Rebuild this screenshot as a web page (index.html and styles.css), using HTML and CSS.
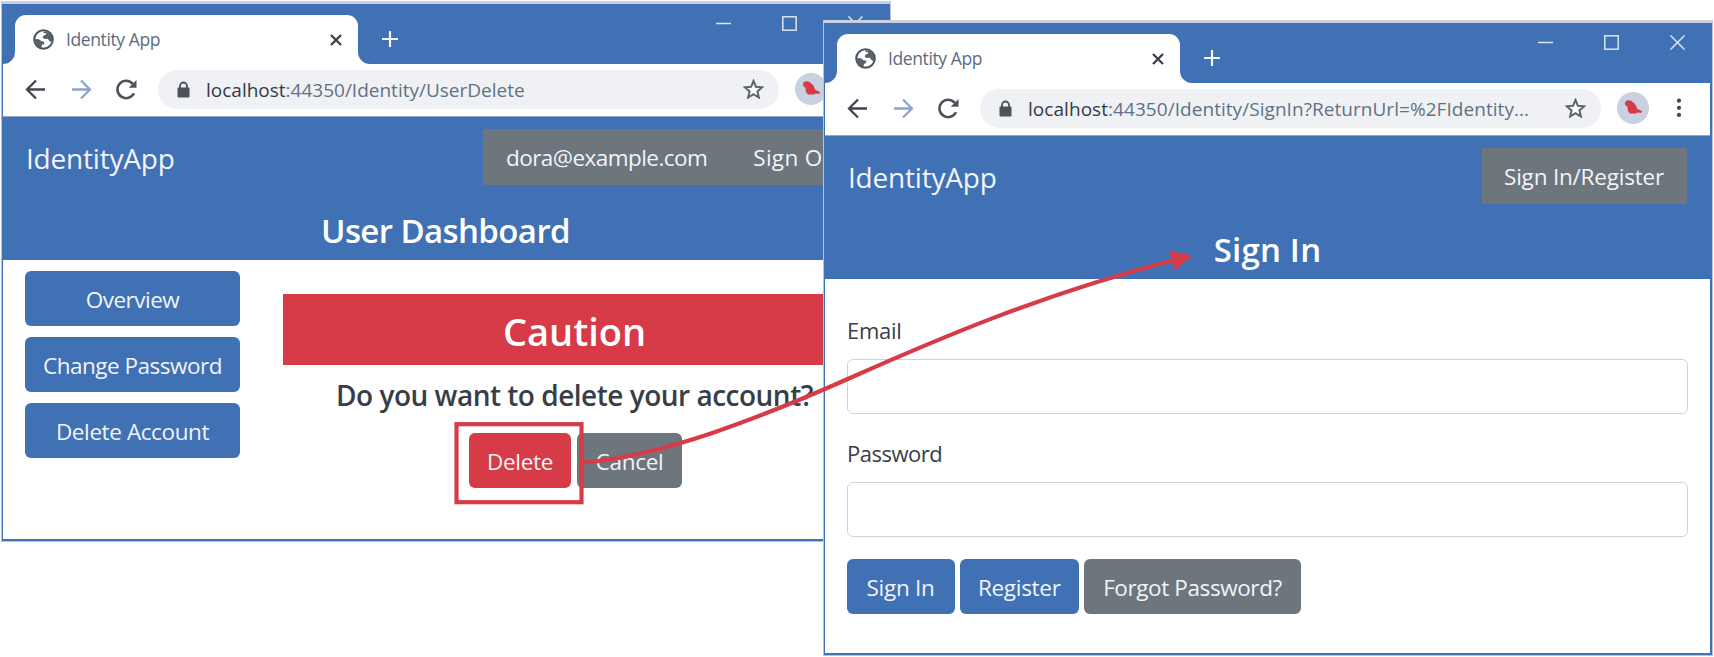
FILE: index.html
```html
<!DOCTYPE html>
<html lang="en">
<head>
<meta charset="utf-8">
<title>Identity App</title>
<link rel="stylesheet" href="styles.css">
</head>
<body>
<svg class="defs" width="0" height="0">
  <symbol id="globe" viewBox="0 0 21 21"><circle cx="10.5" cy="10.5" r="9.3" fill="#fff" stroke="#4b525b" stroke-width="2"/><path d="M11 2.2c3 .3 6 2.200 7.700 5.300.7 2 .5 4-.5 6l-2.200-2-1.200-1.800-3.300.3-2-1.800 1.300-1.800 2.400-.8-.4-1.300-2.600-.4zM1.800 10l4.200.3 2.600 1.900 2.800.5-.4 2.600-2 .5-.5 2.900C4.400 18 1.700 14.300 1.800 10z" fill="#59616a"/></symbol>
  <symbol id="x" viewBox="0 0 12 12"><path d="M1 1l10 10M11 1L1 11" fill="none" stroke="#3a4149" stroke-width="2.300"/></symbol>
  <symbol id="plus" viewBox="0 0 18 18"><path d="M9 1v16M1 9h16" stroke="#f4f6f9" stroke-width="2.200"/></symbol>
  <symbol id="back" viewBox="0 0 21 21"><path d="M20 10.500H2M11 1.500l-9 9 9 9" fill="none" stroke="currentColor" stroke-width="2.300"/></symbol>
  <symbol id="reload" viewBox="0 0 21 21"><path d="M18 14.300A8.700 8.700 0 1 1 16.800 4.800" fill="none" stroke="#4b525b" stroke-width="2.600"/><path d="M20.500 1v7.800h-7.800z" fill="#4b525b"/></symbol>
  <symbol id="lock" viewBox="0 0 13 17"><path d="M3 8V5a3.500 3.500 0 0 1 7 0v3" fill="none" stroke="#4b525b" stroke-width="1.800"/><rect x=".5" y="6.500" width="12" height="10" rx="1" fill="#4b525b"/></symbol>
  <symbol id="star" viewBox="0 0 21 20"><path d="M10.500 2l2.400 5.800 6.300.5-4.800 4.100 1.500 6.100-5.400-3.300-5.400 3.300 1.500-6.100-4.800-4.100 6.300-.5z" fill="#fff" stroke="#5a6570" stroke-width="2"/></symbol>
  <symbol id="bird" viewBox="0 0 32 32"><circle cx="16" cy="16" r="16" fill="#c9d1e0"/><path d="M8 10.500C9 8 12 7.500 14.500 9l3.500 3 2.500 5 4.500 2-1 2-3-.5-2.500 1H13c-2-1.500-2.500-4-2.500-6.500L8 12.500z" fill="#d63b47"/></symbol>
  <symbol id="dots" viewBox="0 0 6 20"><circle cx="3" cy="2.700" r="2.100"/><circle cx="3" cy="9.800" r="2.100"/><circle cx="3" cy="16.900" r="2.100"/></symbol>
  <symbol id="min" viewBox="0 0 15 15"><path d="M0 7.500h15" stroke="#dde4f0" stroke-width="1.500"/></symbol>
  <symbol id="max" viewBox="0 0 15 15"><rect x=".8" y=".8" width="13.400" height="13.400" fill="none" stroke="#dde4f0" stroke-width="1.500"/></symbol>
  <symbol id="close" viewBox="0 0 15 15"><path d="M.5.500l14 14M14.500.500l-14 14" stroke="#dde4f0" stroke-width="1.500"/></symbol>
  <symbol id="curve" viewBox="0 0 14 14"><path d="M0 14A14 14 0 0 0 14 0V14z" fill="#fff"/></symbol>
</svg>

<main class="stage">
  <section class="window window-dashboard">
    <div class="tabs">
      <svg class="curve" width="12" height="12"><use href="#curve"/></svg>
      <div class="tab"><svg width="21" height="21"><use href="#globe"/></svg><span class="tab-title">Identity App</span><svg class="tab-x" width="12" height="12"><use href="#x"/></svg></div>
      <svg class="curve flip" width="12" height="12"><use href="#curve"/></svg>
      <svg class="plus" width="18" height="18"><use href="#plus"/></svg>
      <div class="controls"><svg width="15" height="15"><use href="#min"/></svg><svg width="15" height="15"><use href="#max"/></svg><svg width="15" height="15"><use href="#close"/></svg></div>
    </div>
    <div class="toolbar">
      <svg class="nav-icon" width="21" height="21"><use href="#back"/></svg>
      <svg class="nav-icon forward" width="21" height="21"><use href="#back"/></svg>
      <svg class="nav-icon" width="21" height="21"><use href="#reload"/></svg>
      <div class="address"><svg width="13" height="17"><use href="#lock"/></svg><span class="url url-delete"><b>localhost</b>:44350/Identity/UserDelete</span><svg class="star" width="21" height="20"><use href="#star"/></svg></div>
      <svg class="avatar" width="32" height="32"><use href="#bird"/></svg>
      <svg class="dots" width="6" height="20"><use href="#dots"/></svg>
    </div>
    <header class="header">
      <div class="navbar"><span class="brand">IdentityApp</span><nav class="account account-user"><span class="mail">dora@example.com</span><span class="signout">Sign Out</span></nav></div>
      <h1 class="title title-dashboard">User Dashboard</h1>
    </header>
    <div class="dashboard">
      <aside class="menu"><a class="btn overview">Overview</a><a class="btn change">Change Password</a><a class="btn delete-account">Delete Account</a></aside>
      <div class="panel">
        <h2 class="caution">Caution</h2>
        <p class="question">Do you want to delete your account?</p>
        <div class="actions"><a class="btn danger">Delete</a><a class="btn gray cancel">Cancel</a></div>
      </div>
    </div>
  </section>

  <section class="window window-signin">
    <div class="tabs">
      <svg class="curve" width="12" height="12"><use href="#curve"/></svg>
      <div class="tab"><svg width="21" height="21"><use href="#globe"/></svg><span class="tab-title">Identity App</span><svg class="tab-x" width="12" height="12"><use href="#x"/></svg></div>
      <svg class="curve flip" width="12" height="12"><use href="#curve"/></svg>
      <svg class="plus" width="18" height="18"><use href="#plus"/></svg>
      <div class="controls"><svg width="15" height="15"><use href="#min"/></svg><svg width="15" height="15"><use href="#max"/></svg><svg width="15" height="15"><use href="#close"/></svg></div>
    </div>
    <div class="toolbar">
      <svg class="nav-icon" width="21" height="21"><use href="#back"/></svg>
      <svg class="nav-icon forward" width="21" height="21"><use href="#back"/></svg>
      <svg class="nav-icon" width="21" height="21"><use href="#reload"/></svg>
      <div class="address"><svg width="13" height="17"><use href="#lock"/></svg><span class="url url-signin"><b>localhost</b>:44350/Identity/SignIn?ReturnUrl=%2FIdentity...</span><svg class="star" width="21" height="20"><use href="#star"/></svg></div>
      <svg class="avatar" width="32" height="32"><use href="#bird"/></svg>
      <svg class="dots" width="6" height="20"><use href="#dots"/></svg>
    </div>
    <header class="header">
      <div class="navbar"><span class="brand">IdentityApp</span><nav class="account account-guest"><span>Sign In/Register</span></nav></div>
      <h1 class="title title-signin">Sign In</h1>
    </header>
    <form class="form">
      <label class="label-email" for="email">Email</label>
      <input id="email" type="text">
      <label class="label-password" for="password">Password</label>
      <input id="password" type="password">
      <div class="form-actions"><a class="btn signin">Sign In</a><a class="btn register">Register</a><a class="btn gray forgot">Forgot Password?</a></div>
    </form>
  </section>

  <svg class="annotation" width="1714" height="657" viewBox="0 0 1714 657">
    <rect x="456.500" y="424.200" width="125" height="78" fill="none" stroke="#d63b47" stroke-width="4.200"/>
    <path d="M583 462.500C660 457 760 418 850 378S1040 295 1174 260" fill="none" stroke="#d63b47" stroke-width="4.200"/>
    <path d="M1169 250.500L1192 255.500L1175 270.500z" fill="#d63b47"/>
  </svg>
</main>
</body>
</html>
```
FILE: styles.css
```css
* { box-sizing: border-box; }
body { margin: 0; background: #fff; font-family: "Open Sans", "Noto Sans", sans-serif; color: #383e48; }
svg { display: block; flex: none; }
.defs { position: absolute; }
.stage { position: relative; width: 1714px; height: 657px; overflow: hidden; }

/* Overlapping desktop windows */
.window { position: absolute; width: 890px; background: #fff; border: 1px solid #b4c2da; border-top: 3px solid #c9d1e1; box-shadow: inset 1px 0 #4071b4, inset -2px 0 #4071b4, inset 0 -2px #4071b4; padding: 0 2px 2px 1px; }
.window-dashboard { left: 1px; top: 1px; height: 541px; }
.window-signin { left: 823px; top: 20px; height: 636px; }

.tabs { display: flex; align-items: flex-end; height: 60px; background: #4071b4; }
.tab { display: flex; align-items: center; width: 343px; height: 49px; padding: 0 16px 0 18px; background: #fff; border-radius: 11px 11px 0 0; }
.tab-title { margin-left: 12px; padding-bottom: 2px; font-size: 17.500px; letter-spacing: -.4px; line-height: 24px; color: #5d6b7e; white-space: nowrap; }
.tab-x { margin-left: auto; }
.flip { transform: scaleX(-1); }
.plus { align-self: center; margin: 10px 0 0 11px; }
.controls { display: flex; gap: 51px; align-self: flex-start; margin: 12px 25px 0 auto; }

.toolbar { display: flex; align-items: center; height: 53px; padding: 0 0 2px 22px; border-bottom: 1px solid #94a7c4; color: #3f464e; }
.nav-icon { margin-right: 24.500px; }
.forward { color: #8fa5cb; transform: scaleX(-1); }
.address { display: flex; align-items: center; width: 621px; height: 39px; margin-left: -4px; padding: 0 15px 0 19px; border-radius: 20px; background: #eff1f4; }
.url { margin-left: 16.500px; padding-top: 1px; font-size: 19px; line-height: 28px; color: #617186; white-space: nowrap; }
.url b { font-weight: 400; color: #343b47; }
.url-delete { letter-spacing: 0; }
.url-signin { letter-spacing: .05px; }
.star { margin-left: auto; }
.avatar { margin-left: 16px; }
.dots { margin-left: 27px; fill: #3f464e; }

.header { height: 143px; padding: 12px 23px 0 23px; background: #4071b4; color: #fff; }
.navbar { display: flex; justify-content: space-between; height: 56px; color: #f1f4f9; }
.brand { font-size: 28px; line-height: 58px; letter-spacing: -.2px; }
.account { display: flex; align-items: center; background: #6d757d; font-size: 22.500px; white-space: nowrap; letter-spacing: -.2px; padding: 0 23px 0; gap: 46px; }
.account-user { width: 382px; }
.mail { letter-spacing: -.55px; }
.signout { letter-spacing: .3px; }
.account-guest { width: 205px; padding-left: 22px; }
.title { margin: 22px 0 0; font-size: 33px; line-height: 48px; font-weight: 600; text-align: center; }
.title-dashboard { letter-spacing: -.6px; }
.title-signin { letter-spacing: .2px; }

.btn { display: flex; align-items: center; justify-content: center; height: 55px; padding-top: 1px; border-radius: 6px; background: #4071b4; color: #f1f4f9; font-size: 22.500px; letter-spacing: -.3px; white-space: nowrap; }
.gray { background: #6d757d; }
.danger { width: 102px; background: #d63b47; }
.cancel { width: 105px; }
.overview, .change { letter-spacing: -.5px; }
.delete-account, .forgot { letter-spacing: -.4px; }
.dashboard { display: flex; justify-content: space-between; padding: 11px 22px 0 22px; }
.menu { display: flex; flex-direction: column; gap: 11px; width: 215px; }
.panel { width: 583px; padding-top: 23px; }
.caution { margin: 0; height: 71px; background: #d63b47; color: #fff; font-size: 38px; line-height: 75px; font-weight: 600; text-align: center; }
.question { margin: 11px 0 0; font-size: 28px; line-height: 38px; font-weight: 600; letter-spacing: -.5px; text-align: center; white-space: nowrap; }
.actions { display: flex; justify-content: center; gap: 6px; margin: 19px 0 0 2px; }

.form { display: flex; flex-direction: column; padding: 32px 22px 0 22px; }
.form label { height: 48px; font-size: 22px; line-height: 38px; letter-spacing: -.3px; }
.form input { height: 55px; border: 1.500px solid #ccd3df; border-radius: 6px; background: #fff; outline: 0; }
.form .label-password { margin-top: 20px; letter-spacing: -.5px; }
.form-actions { display: flex; gap: 5px; margin: 22px 0 0 -.5px; }
.signin { width: 108px; }
.register { width: 119.500px; }
.forgot { width: 217px; }

.annotation { position: absolute; inset: 0; pointer-events: none; }
```
